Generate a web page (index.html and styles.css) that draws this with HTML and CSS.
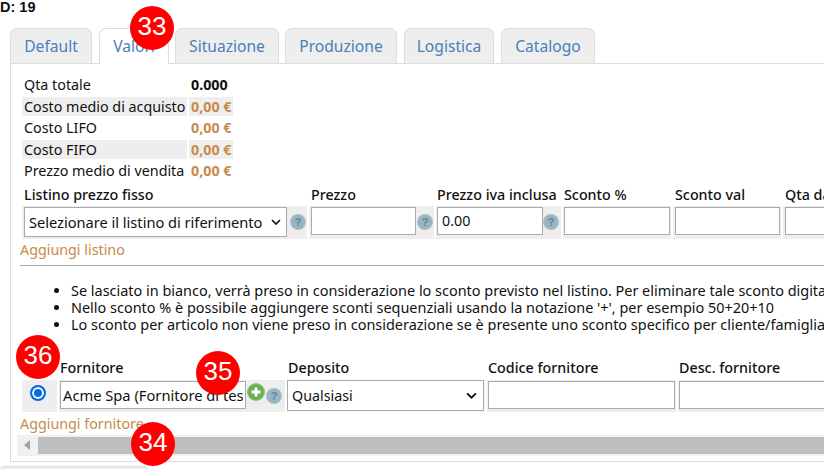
FILE: index.html
```html
<!DOCTYPE html>
<html lang="it">
<head>
<meta charset="utf-8">
<title>Articolo</title>
<link rel="stylesheet" href="styles.css">
</head>
<body>
<div class="page">
  <div class="id-line">ID: 19</div>
  <nav class="tabs">
    <a class="tab t1">Default</a>
    <a class="tab t2 active">Valori</a>
    <a class="tab t3">Situazione</a>
    <a class="tab t4">Produzione</a>
    <a class="tab t5">Logistica</a>
    <a class="tab t6">Catalogo</a>
  </nav>
  <section class="panel">
    <div class="stats">
      <div class="stat-label">Qta totale</div><div class="stat-value total">0.000</div>
      <div class="stat-label shade">Costo medio di acquisto</div><div class="stat-value shade">0,00 €</div>
      <div class="stat-label">Costo LIFO</div><div class="stat-value">0,00 €</div>
      <div class="stat-label shade">Costo FIFO</div><div class="stat-value shade">0,00 €</div>
      <div class="stat-label">Prezzo medio di vendita</div><div class="stat-value">0,00 €</div>
    </div>

    <div class="form-row prices">
      <div class="head">Listino prezzo fisso</div>
      <div class="head">Prezzo</div>
      <div class="head tight">Prezzo iva inclusa</div>
      <div class="head tight">Sconto %</div>
      <div class="head">Sconto val</div>
      <div class="head">Qta da</div>
      <div class="cell">
        <div class="fake-select list-select"><span>Selezionare il listino di riferimento</span><svg class="chev" viewBox="0 0 10 6"><path d="M1 1l4 4 4-4" fill="none" stroke="#111" stroke-width="1.7"/></svg></div>
        <svg class="help list-help" viewBox="0 0 16 16"><use href="#q"/></svg>
      </div>
      <div class="cell"><input class="field price" type="text"><svg class="help" viewBox="0 0 16 16"><use href="#q"/></svg></div>
      <div class="cell tight"><input class="field price wide" type="text" value="0.00"><svg class="help flush" viewBox="0 0 16 16"><use href="#q"/></svg></div>
      <div class="cell tight"><input class="field full" type="text"></div>
      <div class="cell"><input class="field full" type="text"></div>
      <div class="cell"><input class="field full" type="text"></div>
    </div>

    <a class="add-link">Aggiungi listino</a>
    <hr class="rule">

    <ul class="notes">
      <li>Se lasciato in bianco, verrà preso in considerazione lo sconto previsto nel listino. Per eliminare tale sconto digitare 0</li>
      <li>Nello sconto % è possibile aggiungere sconti sequenziali usando la notazione '+', per esempio 50+20+10</li>
      <li>Lo sconto per articolo non viene preso in considerazione se è presente uno sconto specifico per cliente/famiglia</li>
    </ul>

    <div class="form-row suppliers">
      <div class="head"></div>
      <div class="head">Fornitore</div>
      <div class="head">Deposito</div>
      <div class="head">Codice fornitore</div>
      <div class="head">Desc. fornitore</div>
      <div class="cell radio-cell"><span class="radio"></span></div>
      <div class="cell tight">
        <input class="field supplier" type="text" value="Acme Spa (Fornitore di test)">
        <svg class="plus" viewBox="0 0 18 18"><circle cx="9" cy="9" r="9" fill="#8dc279"/><circle cx="9" cy="9" r="7.8" fill="#66b052"/><path d="M9 4.5v9M4.5 9h9" stroke="#fff" stroke-width="2.8"/></svg>
        <svg class="help low" viewBox="0 0 16 16"><use href="#q"/></svg>
      </div>
      <div class="cell plain"><div class="fake-select depot"><span>Qualsiasi</span><svg class="chev" viewBox="0 0 10 6"><path d="M1 1l4 4 4-4" fill="none" stroke="#111" stroke-width="1.7"/></svg></div></div>
      <div class="cell tight"><input class="field full" type="text"></div>
      <div class="cell tight"><input class="field full" type="text"></div>
    </div>

    <a class="add-link supplier-add">Aggiungi fornitore</a>

    <div class="hscroll">
      <svg class="arrow" viewBox="0 0 6 10"><path d="M6 0v10L0 5z" fill="#a3a3a3"/></svg>
      <div class="thumb"></div>
    </div>
  </section>
  <div class="below"></div>

  <span class="marker m33">33</span>
  <span class="marker m36">36</span>
  <span class="marker m35">35</span>
  <span class="marker m34">34</span>
</div>
<svg class="defs" width="0" height="0">
  <symbol id="q" viewBox="0 0 16 16">
    <circle cx="8" cy="8" r="8" fill="#a9c0cc"/>
    <circle cx="8" cy="8" r="7" fill="#9ab4c2"/>
    <text x="8" y="12.2" text-anchor="middle" class="q-mark">?</text>
  </symbol>
</svg>
</body>
</html>
```

FILE: styles.css
```css
html, body {
  margin: 0;
  padding: 0;
  height: 100%;
  overflow: hidden;
  background: #fff;
}
.page {
  position: relative;
  width: 824px;
  height: 469px;
  overflow: hidden;
  font-family: "Noto Sans", sans-serif;
  font-size: 14.3px;
  color: #111;
}
.id-line {
  height: 14px;
  margin-left: -4px;
  font: bold 14.5px/14px "Liberation Sans", sans-serif;
}
.tabs {
  display: flex;
  align-items: flex-end;
  height: 35px;
  margin-top: 14px;
  padding-left: 10px;
}
.tab {
  box-sizing: border-box;
  height: 35px;
  padding-top: 7px;
  text-align: center;
  font-size: 15.6px;
  line-height: 20px;
  color: #4a7fb8;
  background: #eee;
  border: 1px solid #ddd;
  border-bottom: 0;
  border-radius: 7px 7px 0 0;
}
.tab.active { height: 36px; margin-bottom: -1px; background: #fff; position: relative; z-index: 1; }
.t1 { width: 82px; margin-right: 7px; }
.t2 { width: 70px; margin-right: 6px; }
.t3 { width: 104px; margin-right: 6px; }
.t4 { width: 112px; margin-right: 7px; }
.t5 { width: 90px; margin-right: 7px; }
.t6 { width: 94px; }
.panel {
  box-sizing: border-box;
  width: 1000px;
  height: 399px;
  margin-left: 10px;
  padding: 11px 0 0 10px;
  border: 1px solid #ddd;
}
.stats {
  display: grid;
  grid-template-columns: 165px 44px;
  column-gap: 2px;
  row-gap: 2px;
  grid-auto-rows: 19.5px;
  margin-left: 1px;
  line-height: 19.5px;
}
.stat-label { padding-left: 2px; white-space: nowrap; }
.stat-value { padding-left: 2px; font-weight: 700; color: #c98a4b; white-space: nowrap; }
.stat-value.total { color: #111; }
.shade { background: #eee; }
.form-row {
  display: grid;
  margin-left: 1px;
  column-gap: 2px;
  white-space: nowrap;
}
.prices {
  grid-template-columns: 285px 125px 125px 108px 108px 108px;
  grid-template-rows: 24px 33px;
  margin-top: 1px;
}
.head {
  padding: 0 0 1px 2px;
  font-weight: 500;
  line-height: 20px;
  align-self: end;
}
.head.tight { padding-left: 1px; }
.suppliers .head { padding: 0 0 2px 1px; }
.cell {
  display: flex;
  align-items: flex-start;
  box-sizing: border-box;
  padding: 1px 1px 1px 2px;
  background: #eee;
}
.cell.tight { padding-left: 1px; }
.field {
  box-sizing: border-box;
  height: 28px;
  margin: 0;
  padding: 0 3px;
  border: 1px solid #aaa;
  background: #fff;
  color: #111;
  font: 14.3px "Noto Sans", sans-serif;
  outline: 0;
}
.field.full { width: 100%; }
.price { width: 105px; padding-left: 4px; }
.price.wide { width: 106px; }
.fake-select {
  display: flex;
  align-items: center;
  justify-content: space-between;
  box-sizing: border-box;
  height: 30px;
  padding: 0 5px 0 4px;
  border: 1px solid #aaa;
  background: #fff;
}
.list-select { width: 263px; font-size: 14.6px; }
.chev { width: 10px; height: 6px; }
.help { flex: none; width: 16px; height: 16px; margin: 7px 0 0 1px; }
.help.list-help { margin-left: 3px; }
.help.flush { margin-left: 0; }
.q-mark { font: bold 11.5px "Liberation Sans", sans-serif; fill: #5d88a0; }
.add-link {
  display: block;
  margin: 1px 0 0 -1px;
  line-height: 20px;
  color: #c98a4b;
}
.rule {
  height: 0;
  margin: 5px 0 0 -1px;
  border: 0;
  border-top: 1px solid #aaa;
}
.notes {
  margin: 16px 0 0;
  padding-left: 50px;
  font-size: 14.45px;
  line-height: 17px;
  white-space: nowrap;
}
.suppliers {
  grid-template-columns: 35px 226px 198px 189px 189px;
  grid-template-rows: 26px 32px;
  margin-top: 21px;
}
.cell.radio-cell { justify-content: center; padding: 5px 4px 0 0; }
.radio {
  box-sizing: border-box;
  width: 16px;
  height: 16px;
  border-radius: 50%;
  border: 2px solid #0a6be0;
  background: #0a6be0;
  box-shadow: inset 0 0 0 2px #fff;
}
.supplier { width: 186px; flex: none; padding: 0 2px; font-size: 14.7px; }
.plus { flex: none; width: 18px; height: 18px; margin: 2px 0 0 1px; }
.help.low { margin: 7px 0 0 1px; }
.cell.plain { background: #f4f4f4; padding: 0; }
.depot { width: 197px; height: 31px; padding-right: 3px; padding-left: 4px; }
.depot .chev { width: 11px; height: 7px; margin-right: 3px; }
.supplier-add { margin-top: 2px; }
.hscroll {
  display: flex;
  align-items: center;
  height: 21px;
  margin: 1px 0 0 -4px;
  background: #f1f1f1;
}
.arrow { width: 6px; height: 10px; margin: 0 0 0 7px; }
.thumb { flex: 1; height: 17px; margin: 0 0 0 8px; background: #bebebe; }
.below {
  width: 148px;
  height: 3px;
  margin-top: 4px;
  border-top: 1px solid #ddd;
  background: #eee;
  border-radius: 4px 4px 0 0;
}
.marker {
  position: absolute;
  width: 44px;
  height: 44px;
  border-radius: 50%;
  background: #f00;
  color: #fff;
  text-align: center;
  font: 26px/40px "Liberation Sans", sans-serif;
  z-index: 5;
}
.m33 { left: 130px; top: 6px; }
.m36 { left: 16px; top: 335px; }
.m35 { left: 196px; top: 351px; }
.m34 { left: 131px; top: 422px; }
.defs { position: absolute; }
```
